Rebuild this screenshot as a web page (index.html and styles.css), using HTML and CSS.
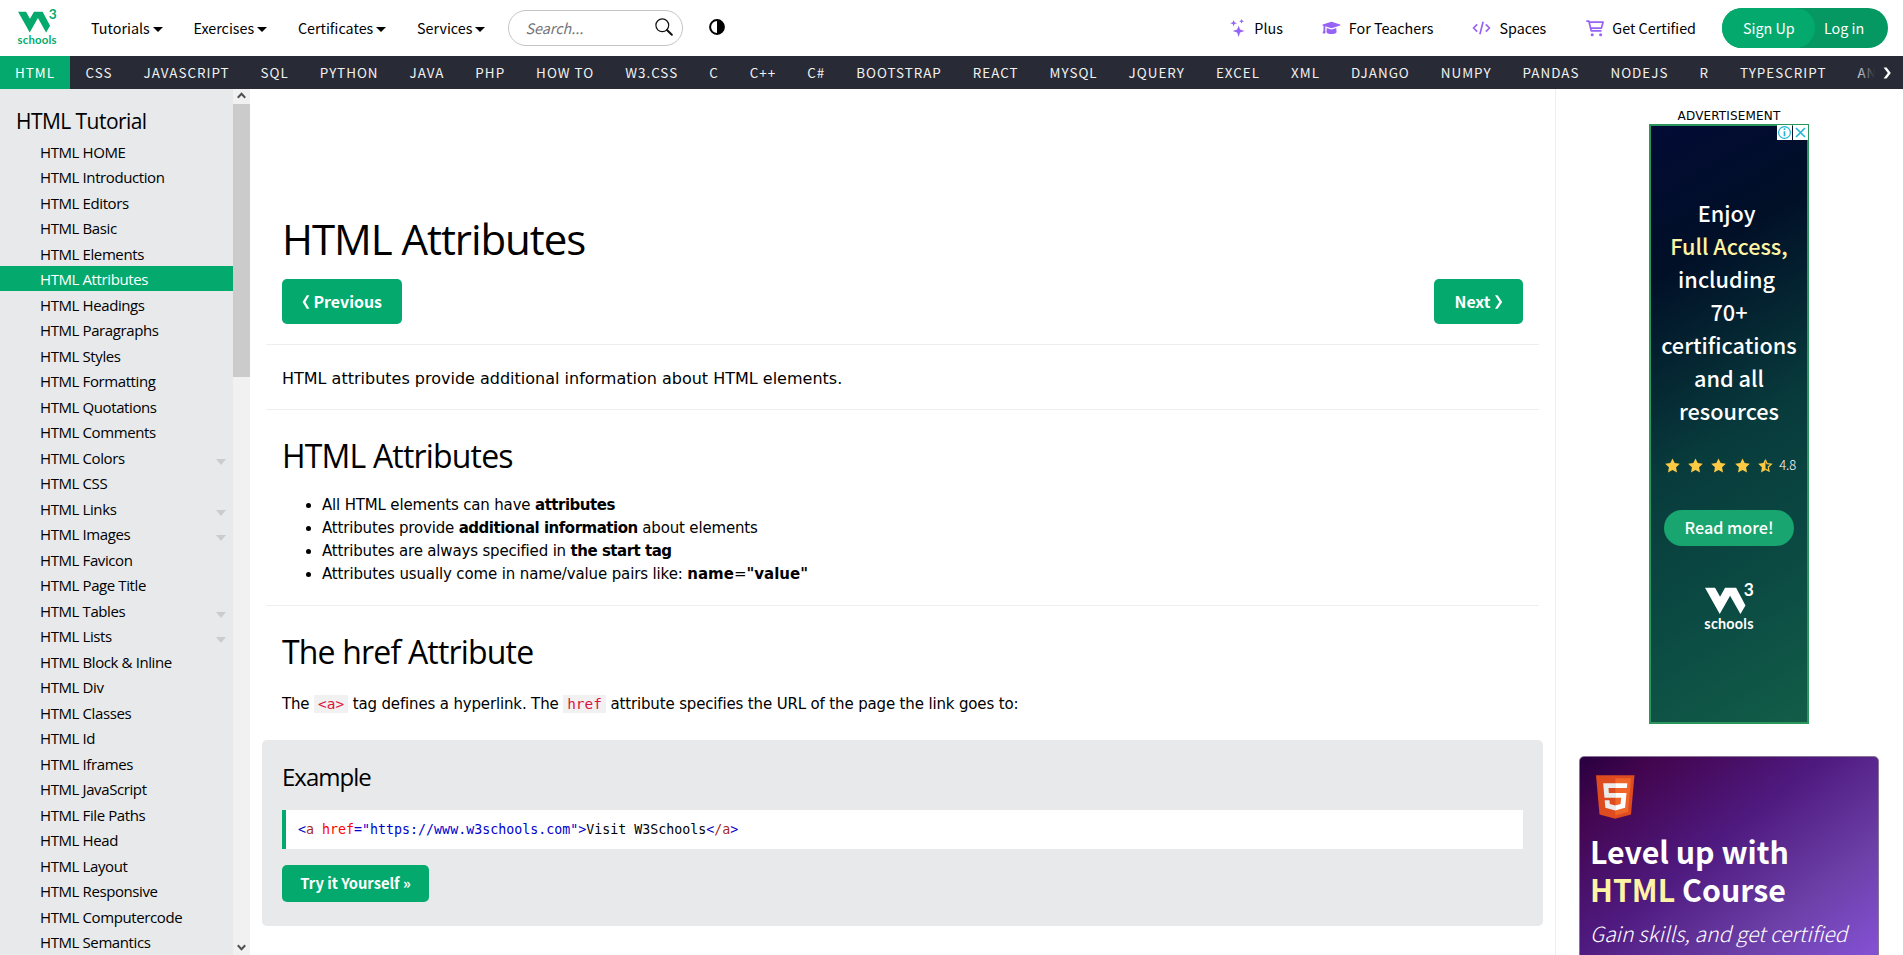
FILE: index.html
```
<!DOCTYPE html>
<html lang="en">
<head>
<meta charset="utf-8">
<title>HTML Attributes</title>
<link rel="stylesheet" href="styles.css">
</head>
<body>
<header class="top">
  <a class="logo">
    <svg class="w3" viewBox="437 788 145 140"><path d="M437 802h30l15 27 15-27h33l28 53-15 26-31-55-31 55z"/><text class="w3-num" x="553" y="828">3</text><text class="w3-word" x="435" y="925">schools</text></svg>
  </a>
  <nav class="menus">
    <a class="menu">Tutorials<i class="caret"></i></a>
    <a class="menu">Exercises<i class="caret"></i></a>
    <a class="menu">Certificates<i class="caret"></i></a>
    <a class="menu">Services<i class="caret"></i></a>
  </nav>
  <div class="search">
    <span class="search-hint">Search...</span>
    <svg class="search-icon" width="18" height="18" viewBox="0 0 18 18"><circle cx="7.3" cy="7.3" r="6.4" fill="none" stroke="#111" stroke-width="1.2"/><path d="M12 12l4.8 4.8" stroke="#111" stroke-width="2" stroke-linecap="round"/></svg>
  </div>
  <svg class="contrast" width="16" height="16" viewBox="0 0 16 16"><circle cx="8" cy="8" r="6.9" fill="#fff" stroke="#000" stroke-width="2"/><path d="M8 1a7 7 0 0 1 0 14z"/></svg>
  <nav class="links">
    <a class="link link-plus"><svg width="15" height="18" viewBox="0 0 15 18"><path d="M8.600 6.700l1.500 3.900 4.400 1.500-4.400 1.500-1.500 4.300-1.500-4.300-4.400-1.500 4.400-1.500zM3.600.9l.9 2.400 2.500.9-2.500.9-.9 2.500-.9-2.500L.2 4.200l2.500-.9zM11.600 0l.7 1.500 1.700.7-1.700.7-.7 1.600-.7-1.600-1.700-.7 1.700-.7z"/></svg>Plus</a>
    <a class="link"><svg width="19" height="14" viewBox="0 0 19 14"><path d="M9.5.8c.3 0 .6 0 .9.1l7.7 2.5c.6.2.6.9 0 1.1l-7.7 2.6c-.6.2-1.2.2-1.8 0L3.300 5.300v4.300c0 1.400.6 2.900-.5 2.900H1c-.5 0-.3-2 .5-3V4.800l-.7-.3c-.6-.2-.6-.9 0-1.100L8.600.9c.3-.1.600-.1.900-.1zM4.800 7.100l3.500 1.200c.8.2 1.600.2 2.400 0l3.500-1.200.4 3.800c0 1.200-2.300 2.200-5.100 2.200s-5.100-1-5.100-2.200z"/></svg>For Teachers</a>
    <a class="link link-spaces"><svg width="19" height="14" viewBox="0 0 19 14" class="stroke"><path d="M5.200 3.300L1.500 7l3.700 3.700M13.800 3.300L17.500 7l-3.700 3.700M11.100.8L7.900 13.200"/></svg>Spaces</a>
    <a class="link"><svg width="18" height="17" viewBox="0 0 18 17"><path class="cart" d="M.3 1.200h2.600l2.300 9.600h10.300M3.300 2.200h13.800l-1.700 5.900H4.600"/><circle cx="6.200" cy="14.800" r="1.500"/><circle cx="14.600" cy="14.800" r="1.500"/></svg>Get Certified</a>
  </nav>
  <div class="account"><a class="signup">Sign Up</a><a class="login">Log in</a></div>
</header>

<nav class="topics">
  <a class="topic topic-on">HTML</a><a class="topic">CSS</a><a class="topic">JAVASCRIPT</a><a class="topic">SQL</a><a class="topic">PYTHON</a><a class="topic">JAVA</a><a class="topic">PHP</a><a class="topic">HOW TO</a><a class="topic">W3.CSS</a><a class="topic">C</a><a class="topic">C++</a><a class="topic">C#</a><a class="topic">BOOTSTRAP</a><a class="topic">REACT</a><a class="topic">MYSQL</a><a class="topic">JQUERY</a><a class="topic">EXCEL</a><a class="topic">XML</a><a class="topic">DJANGO</a><a class="topic">NUMPY</a><a class="topic">PANDAS</a><a class="topic">NODEJS</a><a class="topic">R</a><a class="topic">TYPESCRIPT</a><a class="topic">ANGULAR</a>
  <div class="more"><svg width="9" height="12" viewBox="0 0 9 12"><path d="M.6.600h3L7.800 6l-4.200 5.400h-3L4.800 6z" fill="#fff"/></svg></div>
</nav>

<div class="page">
  <aside class="side">
    <div class="side-list">
      <h2 class="side-title">HTML Tutorial</h2>
      <a class="item">HTML HOME</a>
      <a class="item">HTML Introduction</a>
      <a class="item">HTML Editors</a>
      <a class="item">HTML Basic</a>
      <a class="item">HTML Elements</a>
      <a class="item item-on">HTML Attributes</a>
      <a class="item">HTML Headings</a>
      <a class="item">HTML Paragraphs</a>
      <a class="item">HTML Styles</a>
      <a class="item">HTML Formatting</a>
      <a class="item">HTML Quotations</a>
      <a class="item">HTML Comments</a>
      <a class="item">HTML Colors<i class="sub"></i></a>
      <a class="item">HTML CSS</a>
      <a class="item">HTML Links<i class="sub"></i></a>
      <a class="item">HTML Images<i class="sub"></i></a>
      <a class="item">HTML Favicon</a>
      <a class="item">HTML Page Title</a>
      <a class="item">HTML Tables<i class="sub"></i></a>
      <a class="item">HTML Lists<i class="sub"></i></a>
      <a class="item">HTML Block &amp; Inline</a>
      <a class="item">HTML Div</a>
      <a class="item">HTML Classes</a>
      <a class="item">HTML Id</a>
      <a class="item">HTML Iframes</a>
      <a class="item">HTML JavaScript</a>
      <a class="item">HTML File Paths</a>
      <a class="item">HTML Head</a>
      <a class="item">HTML Layout</a>
      <a class="item">HTML Responsive</a>
      <a class="item">HTML Computercode</a>
      <a class="item">HTML Semantics</a>
    </div>
    <div class="bar">
      <svg class="bar-end" width="17" height="15" viewBox="0 0 17 15"><path d="M4.800 8.800l3.700-4 3.700 4"/></svg>
      <div class="thumb"></div>
      <svg class="bar-end bar-down" width="17" height="15" viewBox="0 0 17 15"><path d="M4.800 5.200l3.700 4 3.700-4"/></svg>
    </div>
  </aside>

  <main class="main">
    <h1 class="h1">HTML Attributes</h1>
    <div class="pager">
      <a class="btn"><svg width="8" height="14" viewBox="0 0 8 14"><path d="M4.800.300h2.600L3.400 7l4 6.700H4.800L.6 7z"/></svg>Previous</a>
      <a class="btn">Next<svg width="9" height="14" viewBox="0 0 9 14"><path d="M3.600.300H1L5.300 7 1 13.700h2.600L8.200 7z"/></svg></a>
    </div>
    <hr class="rule">
    <p class="intro">HTML attributes provide additional information about HTML elements.</p>
    <hr class="rule">
    <h2 class="h2">HTML Attributes</h2>
    <ul class="list">
      <li>All HTML elements can have <b>attributes</b></li>
      <li>Attributes provide <b>additional information</b> about elements</li>
      <li>Attributes are always specified in <b>the start tag</b></li>
      <li>Attributes usually come in name/value pairs like: <b class="wide">name<span class="eq">=</span>"value"</b></li>
    </ul>
    <hr class="rule">
    <h2 class="h2">The href Attribute</h2>
    <p class="text">The <code class="code">&lt;a&gt;</code> tag defines a hyperlink. The <code class="code">href</code> attribute specifies the URL of the page the link goes to:</p>
    <section class="example">
      <h3 class="h3">Example</h3>
      <div class="snippet"><span class="t">&lt;</span><span class="n">a</span><span class="a"> href</span><span class="t">="https://www.w3schools.com"</span><span class="t">&gt;</span>Visit W3Schools<span class="t">&lt;</span><span class="n">/a</span><span class="t">&gt;</span></div>
      <a class="try">Try it Yourself »</a>
    </section>
  </main>

  <aside class="right">
    <div class="ad-label">ADVERTISEMENT</div>
    <div class="ad">
      <div class="ad-tools">
        <svg width="15" height="15" viewBox="0 0 15 15"><rect width="15" height="15" fill="#fff"/><circle cx="7.500" cy="7.500" r="5.900" fill="none" stroke="#1fb5d6" stroke-width="1.200"/><path d="M7.500 6.200v5M7.500 3.300v1.700" stroke="#1fb5d6" stroke-width="1.700"/></svg>
        <svg width="15" height="15" viewBox="0 0 15 15"><rect width="15" height="15" fill="#fff"/><path d="M3 3l9 9M12 3l-9 9" stroke="#1fb5d6" stroke-width="1.600"/></svg>
      </div>
      <div class="ad-copy">Enjoy&nbsp;<br><span class="gold">Full Access,</span><br>including&nbsp;<br>70+<br>certifications<br>and all<br>resources</div>
      <div class="stars">
        <svg viewBox="0 0 24 24"><path d="M12 .6l3.500 7.500 8.200 1-6 5.700 1.500 8.200L12 19l-7.200 4 1.500-8.200-6-5.700 8.200-1z"/></svg>
        <svg viewBox="0 0 24 24"><path d="M12 .6l3.500 7.500 8.200 1-6 5.700 1.500 8.200L12 19l-7.200 4 1.500-8.200-6-5.700 8.200-1z"/></svg>
        <svg viewBox="0 0 24 24"><path d="M12 .6l3.500 7.500 8.200 1-6 5.700 1.500 8.200L12 19l-7.200 4 1.500-8.200-6-5.700 8.200-1z"/></svg>
        <svg viewBox="0 0 24 24"><path d="M12 .6l3.500 7.500 8.200 1-6 5.700 1.500 8.200L12 19l-7.200 4 1.500-8.200-6-5.700 8.200-1z"/></svg>
        <svg viewBox="0 0 24 24"><path d="M12 .6V19l-7.200 4 1.500-8.200-6-5.700 8.200-1z"/><path class="half" d="M12 3.200l2.500 5.900 6.800.9-4.900 4.500 1.200 6.500-5.600-3.200"/></svg>
        <span class="score">4.8</span>
      </div>
      <a class="read">Read more!</a>
      <svg class="w3 w3-white" viewBox="437 788 145 140"><path d="M437 802h30l15 27 15-27h33l28 53-15 26-31-55-31 55z"/><text class="w3-num" x="553" y="828">3</text><text class="w3-word" x="435" y="925">schools</text></svg>
    </div>
    <div class="card">
      <svg class="shield" viewBox="30 0 451 512"><path fill="#dd4b1f" d="M71 460L30 0h451l-41 460-185 52z"/><path fill="#ef652a" d="M256 472l149-41 35-394H256z"/><path fill="#ebebeb" d="M256 208h-75l-5-58h80V94H114l15 171h127zm0 147l-64-17-4-45h-56l7 89 117 32z"/><path fill="#fff" d="M255 208v57h70l-7 73-63 17v59l116-32 16-174zm0-114v56h137l5-56z"/></svg>
      <div class="card-title">Level up with<br><span class="gold">HTML</span> Course</div>
      <div class="card-sub">Gain skills, and get certified</div>
    </div>
  </aside>
</div>
</body>
</html>
```
FILE: styles.css
```
body {
  margin: 0;
  height: 955px;
  overflow: hidden;
  background: #fff;
  color: #000;
  font-family: "DejaVu Sans", sans-serif;
  font-size: 15px;
}

svg { display: block; flex: none; }

/* header */
.top {
  display: flex;
  align-items: center;
  height: 56px;
  padding-right: 15px;
  box-sizing: border-box;
  font: 14.33px/24px "Noto Sans CJK SC", sans-serif;
  white-space: nowrap;
}
.logo { width: 73px; padding-left: 18px; margin-top: -3px; box-sizing: content-box; }
.w3 { width: 38.500px; height: 37px; fill: #04aa6d; overflow: visible; }
.w3-num { font: 700 52px Lato, sans-serif; }
.w3-word { font: 700 43px Lato, sans-serif; letter-spacing: 0.700px; }
.menus { display: flex; gap: 30.700px; }
.menu { display: flex; align-items: center; gap: 3px; }
.caret { border: 5px solid transparent; border-top: 5.500px solid #000; border-bottom: 0; margin-top: 3px; }
.search {
  display: flex;
  align-items: center;
  justify-content: space-between;
  width: 175px;
  height: 36px;
  box-sizing: border-box;
  margin-left: 23px;
  padding: 0 9px 0 16px;
  border: 1px solid #c4c4c4;
  border-radius: 18px;
}
.search-hint { color: #757575; font-style: italic; }
.search-icon { margin-top: -2px; }
.contrast { margin: -2px 0 0 26px; }
.links { display: flex; gap: 39px; margin-left: auto; }
.link { display: flex; align-items: center; gap: 8px; }
.link svg { fill: #9763f6; }
.link-plus { gap: 9px; }
.link-spaces { margin-right: 1px; }
.link .stroke, .cart { fill: none; stroke: #9763f6; stroke-width: 1.700; stroke-linejoin: round; }
.account {
  display: flex;
  width: 166px;
  height: 40px;
  margin-left: 26px;
  border-radius: 20px;
  background: #059862;
  color: #fff;
  line-height: 40px;
}
.signup { width: 93px; box-sizing: border-box; padding-left: 21px; border-radius: 20px; background: #04aa6d; }
.login { padding-left: 9px; }

/* topic bar */
.topics {
  position: relative;
  display: flex;
  height: 33px;
  overflow: hidden;
  background: #282a35;
  color: #f1f1f1;
  font: 13.430px/32px "Noto Sans CJK SC", sans-serif;
  letter-spacing: 1px;
  white-space: nowrap;
}
.topic { padding: 0 15.200px 0 15.800px; }
.topic-on { padding: 0 14.800px 0 15px; background: #04aa6d; color: #fff; }
.more {
  position: absolute;
  top: 0;
  right: 0;
  display: flex;
  align-items: center;
  width: 48px;
  height: 33px;
  padding-left: 28px;
  box-sizing: border-box;
  background: linear-gradient(90deg, rgba(40, 42, 53, 0), #282a35 20px);
}

/* body columns */
.page { display: flex; height: 866px; overflow: hidden; }
.side { display: flex; width: 250px; background: #e7e9eb; font-family: "Open Sans", sans-serif; }
.side-list { width: 233px; }
.side-title { margin: 16px 0 1.400px 16px; font-size: 21px; font-weight: 400; line-height: 32px; letter-spacing: -0.550px; }
.item {
  display: flex;
  justify-content: space-between;
  align-items: center;
  height: 25.500px;
  box-sizing: border-box;
  padding: 1.200px 7px 0 40px;
  font-size: 15px;
  line-height: 24px;
  letter-spacing: -0.400px;
}
.item-on { background: #04aa6d; color: #fff; }
.sub { border: 5px solid transparent; border-top: 6px solid #ccc; border-bottom: 0; margin-top: 8px; }
.bar { display: flex; flex-direction: column; width: 17px; background: #f1f1f1; }
.bar-end path { fill: none; stroke: #505050; stroke-width: 2; }
.thumb { height: 273px; background: #cbcbcb; }
.bar-down { margin-top: auto; }

/* article */
.main { flex: 1; padding: 118px 16px 0; }
.h1 { margin: 0 0 9px 16px; font: 400 42px/63px "Open Sans", sans-serif; letter-spacing: -1.050px; }
.pager { display: flex; justify-content: space-between; margin: 0 16px 20px; }
.btn {
  display: flex;
  align-items: center;
  gap: 3.500px;
  height: 45px;
  padding: 0 20px;
  border-radius: 5px;
  background: #04aa6d;
  color: #fff;
  fill: #fff;
  font: 700 15.900px/45px "Noto Sans CJK SC", sans-serif;
}
.rule { height: 1px; margin: 0; border: 0; background: #eee; }
.intro { margin: 20px 16px 17px; font-size: 16px; line-height: 27px; }
.h2 { margin: 22px 16px 0; font: 400 32px/48px "Open Sans", sans-serif; letter-spacing: -0.820px; }
.list { margin: 14px 0 19px; padding-left: 56px; line-height: 23px; letter-spacing: -0.170px; }
.list b { letter-spacing: -0.480px; }
.list li:last-child { letter-spacing: -0.130px; }
.list .wide { letter-spacing: 0; }
.eq { font-weight: 400; }
.text { margin: 17px 16px 24px; line-height: 23px; letter-spacing: -0.150px; }
.code {
  padding: 1px 4px;
  background: #f1f1f1;
  color: #dc143c;
  font: 14.380px/16px "DejaVu Sans Mono", monospace;
  letter-spacing: 0;
}
.example { height: 186px; box-sizing: border-box; margin: 0 -4px; padding: 19px 20px 0; border-radius: 5px; background: #e7e9eb; }
.h3 { margin: 0 0 15px; font: 400 24px/36px "Open Sans", sans-serif; letter-spacing: -1px; }
.snippet {
  height: 39px;
  margin-bottom: 16px;
  padding-left: 12px;
  border-left: 4px solid #04aa6d;
  background: #fff;
  font: 13.300px/40px "DejaVu Sans Mono", monospace;
  white-space: pre;
}
.t { color: #0000cd; }
.n { color: #a52a2a; }
.a { color: #f00; }
.try {
  display: block;
  width: 147px;
  height: 37px;
  border-radius: 5px;
  background: #04aa6d;
  color: #fff;
  font: 700 14.700px/36px "Noto Sans CJK SC", sans-serif;
  text-align: center;
}

/* right column */
.right {
  display: flex;
  flex-direction: column;
  align-items: center;
  width: 348px;
  box-sizing: border-box;
  padding: 19px 1px 0 0;
  border-left: 1px solid #eee;
}
.ad-label { margin-bottom: -1px; font-size: 12px; line-height: 17px; letter-spacing: 0.150px; }
.ad {
  position: relative;
  display: flex;
  flex-direction: column;
  align-items: center;
  flex: none;
  width: 160px;
  height: 600px;
  box-sizing: border-box;
  padding-top: 70px;
  border: 2px solid #2a965d;
  background: linear-gradient(150deg, #020b35 0%, #010f27 22%, #083b3c 52%, #0b4a43 75%, #125d48 100%);
  color: #fff;
  font-family: "Noto Sans CJK SC", sans-serif;
}
.ad-tools { position: absolute; top: -1px; right: -1px; display: flex; gap: 1px; }
.ad-copy { font-size: 21.700px; font-weight: 500; line-height: 33px; text-align: center; }
.gold { color: #fff4a3; }
.stars { display: flex; align-items: center; gap: 8.400px; height: 18px; margin-top: 29px; padding-left: 3px; }
.stars svg { width: 15px; height: 15px; fill: #ffca43; }
.stars .half { fill: none; stroke: #ffca43; stroke-width: 2; }
.score { margin-left: -2.500px; font-size: 13px; font-weight: 300; line-height: 18px; }
.read {
  width: 130px;
  height: 36px;
  margin-top: 36px;
  border-radius: 18px;
  background: #18a56f;
  font-size: 16.200px;
  font-weight: 500;
  line-height: 35px;
  text-align: center;
}
.w3-white { width: 48.500px; height: 46.800px; margin: 37px 0 0 1px; fill: #fff; }
.card {
  flex: none;
  width: 300px;
  height: 250px;
  margin-top: 32px;
  padding: 18px 0 0 10px;
  box-sizing: border-box;
  border: 1px solid #8a7396;
  border-radius: 5px;
  background: linear-gradient(142deg, #28003f 0%, #43054f 13%, #4f1a80 40%, #6b3fa6 66%, #8350d2 88%);
  color: #fff;
  font-family: "Noto Sans CJK SC", sans-serif;
  white-space: nowrap;
}
.shield { width: 38.500px; height: 44px; margin-left: 6px; }
.card-title { margin-top: 13px; font-size: 30.300px; font-weight: 700; line-height: 38px; }
.card-sub { margin-top: 10px; font-size: 21px; font-weight: 300; font-style: italic; line-height: 30px; }
```
